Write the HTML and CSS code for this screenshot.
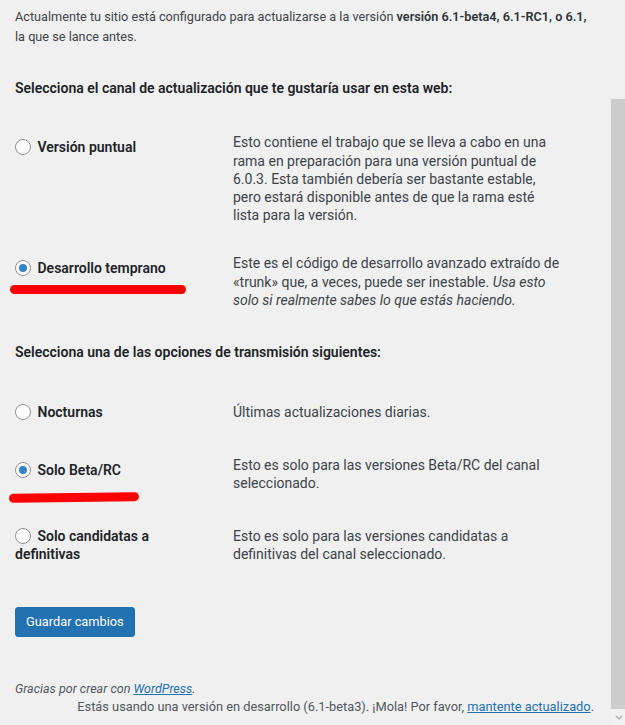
FILE: index.html
```html
<!DOCTYPE html>
<html lang="es">
<head>
<meta charset="utf-8">
<title>Ajustes de Beta Tester</title>
<link rel="stylesheet" href="styles.css">
</head>
<body>
<div class="page">
  <div class="content">
    <div class="wrap">
      <p class="intro">Actualmente tu sitio está configurado para actualizarse a la versión <strong>versión 6.1-beta4, 6.1-RC1, o 6.1,</strong> la que se lance antes.</p>

      <p class="section-title">Selecciona el canal de actualización que te gustaría usar en esta web:</p>
      <div class="form-table">
        <div class="th"><label><span class="radio"></span> Versión puntual</label></div>
        <div class="td">Esto contiene el trabajo que se lleva a cabo en una<br>rama en preparación para una versión puntual de<br>6.0.3. Esta también debería ser bastante estable,<br>pero estará disponible antes de que la rama esté<br>lista para la versión.</div>

        <div class="th"><label><span class="radio checked"></span> Desarrollo temprano</label><span class="mark mark-1"></span></div>
        <div class="td">Este es el código de desarrollo avanzado extraído de<br>«trunk» que, a veces, puede ser inestable. <em>Usa esto<br>solo si realmente sabes lo que estás haciendo.</em></div>
      </div>

      <p class="section-title second">Selecciona una de las opciones de transmisión siguientes:</p>
      <div class="form-table">
        <div class="th"><label><span class="radio"></span> Nocturnas</label></div>
        <div class="td">Últimas actualizaciones diarias.</div>

        <div class="th"><label><span class="radio checked"></span> Solo Beta/RC</label><span class="mark mark-2"></span></div>
        <div class="td">Esto es solo para las versiones Beta/RC del canal<br>seleccionado.</div>

        <div class="th"><label><span class="radio"></span> Solo candidatas a definitivas</label></div>
        <div class="td">Esto es solo para las versiones candidatas a<br>definitivas del canal seleccionado.</div>
      </div>

      <div class="submit"><button class="button-primary" type="button">Guardar cambios</button></div>
    </div>

    <footer class="footer">
      <p class="footer-left">Gracias por crear con <a href="#">WordPress</a>.</p>
      <p class="footer-right">Estás usando una versión en desarrollo (6.1-beta3). ¡Mola! Por favor, <a href="#">mantente actualizado</a>.</p>
    </footer>
  </div>

  <div class="scrollbar">
    <div class="thumb"></div>
    <div class="arrow">
      <svg width="8" height="5" viewBox="0 0 8 5"><path d="M0.8 0.8 L4 4 L7.2 0.8" fill="none" stroke="#a3a3a3" stroke-width="1.2"/></svg>
    </div>
  </div>
</div>
</body>
</html>
```
FILE: styles.css
```css
* { box-sizing: border-box; }

html, body {
  margin: 0;
  padding: 0;
  background: #f0f0f1;
}

body {
  font-family: Roboto, "Liberation Sans", sans-serif;
  color: #3c434a;
}

.page {
  display: flex;
  height: 725px;
  overflow: hidden;
}

.content {
  flex: 1;
  min-width: 0;
  padding: 7px 20px 0 15px;
}

.intro {
  margin: 0 -2px 0 0;
  font-size: 12.7px;
  line-height: 20px;
  color: #3c434a;
}

.intro strong {
  font-weight: 600;
  color: #2c3338;
}

.section-title {
  margin: 31.9px 0 0;
  font-size: 14px;
  line-height: 18.2px;
  font-weight: 600;
  color: #1d2327;
}

.section-title.second {
  margin-top: 19px;
}

.form-table {
  display: grid;
  grid-template-columns: 208px 1fr;
  margin-top: 21.3px;
  font-size: 14px;
  line-height: 18.2px;
}

.th {
  position: relative;
  align-self: start;
  padding: 20px 8px 20px 0;
  font-weight: 600;
  color: #1d2327;
}

.td {
  align-self: center;
  padding: 15px 10px;
  color: #3c434a;
}

.td em {
  font-style: italic;
}

.radio {
  display: inline-block;
  position: relative;
  width: 16px;
  height: 16px;
  margin-right: 3px;
  border: 1px solid #8c8f94;
  border-radius: 50%;
  background: #fff;
  vertical-align: -3px;
}

.radio.checked::before {
  content: "";
  position: absolute;
  left: 3px;
  top: 3px;
  width: 8px;
  height: 8px;
  border-radius: 50%;
  background: #3582c4;
}

.mark {
  position: absolute;
  height: 9px;
  border-radius: 5px;
  background: #ff0000;
}

.mark-1 {
  left: -5px;
  top: 46px;
  width: 176px;
}

.mark-2 {
  left: -6px;
  top: 52px;
  width: 130px;
  transform: rotate(-0.8deg);
}

.submit {
  margin-top: 23px;
}

.button-primary {
  display: inline-block;
  height: 30px;
  padding: 0 10px;
  border: 1px solid #2271b1;
  border-radius: 3px;
  background: #2271b1;
  color: #fff;
  font-family: Roboto, "Liberation Sans", sans-serif;
  font-size: 12.8px;
  line-height: 28px;
}

.footer {
  margin-top: 43px;
  margin-right: -3px;
  font-size: 12.8px;
  line-height: 18px;
  color: #50575e;
}

.footer p {
  margin: 0;
}

.footer-left {
  margin-left: -1px;
  font-style: italic;
  font-size: 12.5px;
}

.footer-right {
  text-align: right;
}

.footer a {
  color: #2271b1;
  text-decoration: underline;
}

.scrollbar {
  width: 14px;
  flex: none;
  display: flex;
  flex-direction: column;
  padding-top: 99px;
  background: #f0f0f1;
}

.thumb {
  height: 610px;
  background: #cdcdcd;
}

.arrow {
  flex: 1;
  display: flex;
  align-items: center;
  justify-content: center;
  background: #f1f1f1;
}

.arrow svg {
  display: block;
  margin-left: 1px;
}
```
